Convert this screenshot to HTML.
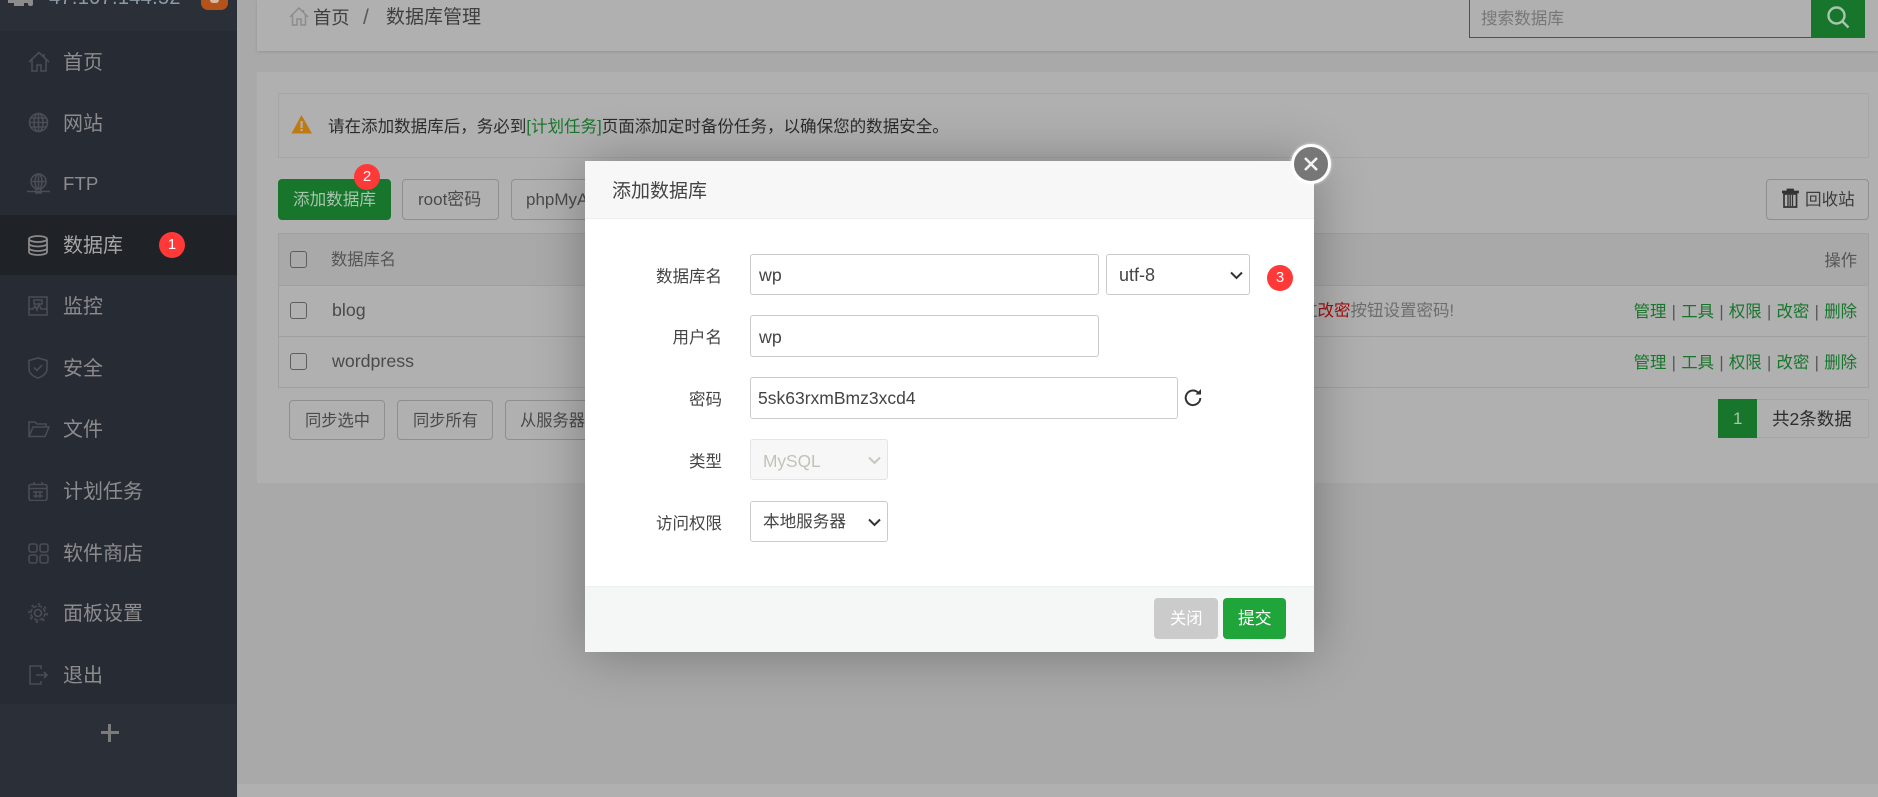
<!DOCTYPE html>
<html lang="zh"><head><meta charset="utf-8"><title>数据库管理</title>
<style>
html,body{margin:0;padding:0;width:1878px;height:797px;overflow:hidden;background:#a9a9a9}
body{position:relative;font-family:"Liberation Sans","Noto Sans CJK SC",sans-serif;font-size:16.25px;color:#3f3f3f}
div,span,svg{position:absolute;box-sizing:border-box}
.t{white-space:nowrap;height:40px;line-height:40px;margin-top:1px}
.t span{position:static}
.nav{left:63px;font-size:20px;color:#8c8c8e}
.ic{fill:none;stroke:#4a4d53;stroke-width:1.6}
.b{border:1px solid #8f8f8f;border-radius:4px;background:#b0b0b0}
.inp{border:1px solid #cbcbcb;border-radius:3px;background:#fff}
.lab{right:1156px;color:#444;font-size:16.500px}
.g{color:#17762c;word-spacing:.75px}
.cb{left:290px;width:17px;height:17px;border:1px solid #5e5e5e;border-radius:3px}
.rb{width:26px;height:26px;border-radius:50%;background:#ff3838;color:#fff;font-size:15px;line-height:26px;text-align:center}
.sep{color:#555}
</style></head><body>

<!-- sidebar -->
<div style="left:0;top:0;width:237px;height:797px;background:#2b2f38"></div>
<div style="left:0;top:31px;width:237px;height:673px;background:#272b33"></div>
<div style="left:0;top:215px;width:237px;height:60px;background:#1f2227"></div>
<div style="left:8px;top:0;width:20px;height:3px;background:#8c8c8c"></div>
<div style="left:14px;top:3px;width:10px;height:3px;background:#8c8c8c"></div>
<div style="left:28px;top:0;width:5px;height:6px;background:#8c8c8c;border-radius:0 0 2px 2px"></div>
<div class="t" style="left:49px;top:-23px;font-size:20px;color:#8c9aa6;letter-spacing:.3px">47.107.144.52</div>
<div style="left:201px;top:-18px;width:27px;height:28px;background:#b4521c;border-radius:7px"></div>
<div style="left:210px;top:0;width:9px;height:3px;background:#d8b8a4;border-radius:0 0 4px 4px"></div>

<svg class="ic" style="left:28px;top:51px" width="22" height="21" viewBox="0 0 22 21"><path d="M1 11L11 1.5 21 11M4 9v11h5v-6h4v6h5V9M16 3v3"/></svg>
<div class="t nav" style="top:42px">首页</div>
<svg class="ic" style="left:28px;top:112px" width="21" height="21" viewBox="0 0 21 21"><circle cx="10.5" cy="10.5" r="9"/><ellipse cx="10.5" cy="10.5" rx="4.5" ry="9"/><path d="M10.5 1.5v18M1.5 10.5h18M3 6h15M3 15h15"/></svg>
<div class="t nav" style="top:103px">网站</div>
<svg class="ic" style="left:27px;top:173px" width="23" height="21" viewBox="0 0 23 21"><circle cx="11.5" cy="8.500" r="7.500"/><ellipse cx="11.500" cy="8.500" rx="3.500" ry="7.500"/><path d="M11.500 1v15M4 8.500h15M0 18.500h23M9 16h5v4H9z"/></svg>
<div class="t nav" style="top:163px;font-size:18.750px">FTP</div>
<svg style="left:28px;top:235px" width="20" height="21" viewBox="0 0 20 21" fill="none" stroke="#8a8a8a" stroke-width="1.800"><ellipse cx="10" cy="4" rx="9" ry="3"/><path d="M1 4v13c0 1.700 4 3 9 3s9-1.300 9-3V4M1 8.500c0 1.700 4 3 9 3s9-1.300 9-3M1 13c0 1.700 4 3 9 3s9-1.300 9-3"/></svg>
<div class="t nav" style="top:225px;color:#a6a6a6">数据库</div>
<div class="rb" style="left:159px;top:232px">1</div>
<svg class="ic" style="left:28px;top:296px" width="20" height="20" viewBox="0 0 20 20"><path d="M1 1h18v18H1zM1 13h4l2-3 2 4 2-6 2 5h6M6 4h8v4H6z"/></svg>
<div class="t nav" style="top:286px">监控</div>
<svg class="ic" style="left:28px;top:357px" width="20" height="22" viewBox="0 0 20 22"><path d="M1 3.500L10 1l9 2.500V12c0 4-4 7.500-9 9-5-1.500-9-5-9-9zM6 10.500l3 3 5-5.500"/></svg>
<div class="t nav" style="top:348px">安全</div>
<svg class="ic" style="left:28px;top:420px" width="22" height="18" viewBox="0 0 22 18"><path d="M1 16V2h6l2 2h9v3M1 16.500h16L21 7H5z"/></svg>
<div class="t nav" style="top:409px">文件</div>
<svg class="ic" style="left:28px;top:482px" width="20" height="19" viewBox="0 0 20 19"><path d="M3 2.500h14a2 2 0 012 2v12a2 2 0 01-2 2H3a2 2 0 01-2-2v-12a2 2 0 012-2zM1 6.500h18M6 0v3M14 0v3M5 10h10M5 14h10M8 9v7M12 9v7"/></svg>
<div class="t nav" style="top:471px">计划任务</div>
<svg class="ic" style="left:28px;top:543px" width="21" height="21" viewBox="0 0 21 21" stroke-width="2"><rect x="1" y="1" width="8" height="8" rx="2"/><rect x="12" y="1" width="8" height="8" rx="2"/><rect x="1" y="12" width="8" height="8" rx="2"/><rect x="12" y="12" width="8" height="8" rx="2"/></svg>
<div class="t nav" style="top:533px">软件商店</div>
<svg class="ic" style="left:28px;top:603px" width="20" height="20" viewBox="0 0 20 20"><circle cx="10" cy="10" r="3.500"/><circle cx="10" cy="10" r="7" stroke-dasharray="4 1.500"/><circle cx="10" cy="10" r="9" stroke-dasharray="2.500 4.500"/></svg>
<div class="t nav" style="top:593px">面板设置</div>
<svg class="ic" style="left:29px;top:665px" width="20" height="20" viewBox="0 0 20 20" stroke-width="1.800"><path d="M12 4V1H1v18h11v-3M7 10h11M15 7l3 3-3 3"/></svg>
<div class="t nav" style="top:655px">退出</div>
<div style="left:101px;top:731px;width:18px;height:3px;background:#7b7b7b"></div>
<div style="left:108px;top:724px;width:3px;height:18px;background:#7b7b7b"></div>

<!-- top panel -->
<div style="left:257px;top:0;width:1621px;height:51px;background:#b0b0b0;box-shadow:0 1px 3px rgba(0,0,0,.12)"></div>
<svg style="left:289px;top:7px" width="20" height="19" viewBox="0 0 20 19" fill="none" stroke="#8c8c8c" stroke-width="1.500"><path d="M1 10L10 1l9 9M3.500 8v10h4.500v-6h4v6h4.500V8M14.500 3v3"/></svg>
<div class="t" style="left:313px;top:-3px;font-size:18.300px;color:#3f3f3f">首页</div>
<div class="t" style="left:363px;top:-3px;font-size:21px;color:#5a5a5a">/</div>
<div class="t" style="left:386px;top:-3px;font-size:19px;color:#3f3f3f">数据库管理</div>
<div style="left:1469px;top:-2px;width:343px;height:40px;border:1px solid #17762c;background:#b0b0b0"></div>
<div class="t" style="left:1481px;top:-2px;color:#777;font-size:16.600px">搜索数据库</div>
<div style="left:1811px;top:-2px;width:54px;height:40px;background:#17762c"></div>
<svg style="left:1827px;top:6px" width="23" height="23" viewBox="0 0 23 23" fill="none" stroke="#a8c5ad" stroke-width="2.400"><circle cx="9.500" cy="9.500" r="8"/><path d="M15.500 15.500l6 6"/></svg>

<!-- content panel -->
<div style="left:257px;top:72px;width:1621px;height:411px;background:#b0b0b0"></div>
<div style="top:784px;left:237px;width:1641px;height:13px;background:#b0b0b0"></div>
<div style="left:278px;top:93px;width:1591px;height:65px;border:1px solid #a6a6a6"></div>
<svg style="left:291px;top:115px" width="21" height="19" viewBox="0 0 21 19"><path d="M10.500 0L21 18.500H0.500z" fill="#c07a12"/><rect x="9.500" y="6" width="2.200" height="7" fill="#b0b0b0"/><rect x="9.500" y="14" width="2.200" height="2.200" fill="#b0b0b0"/></svg>
<div class="t" style="left:328px;top:106px;color:#2c2c2c;font-size:16.550px">请在添加数据库后，务必到<span style="color:#17762c">[计划任务]</span>页面添加定时备份任务，以确保您的数据安全。</div>

<div style="left:278px;top:179px;width:113px;height:41px;background:#17762c;border-radius:4px"></div>
<div class="t" style="left:293px;top:179px;color:#a8c5ad;font-size:16.600px">添加数据库</div>
<div class="rb" style="left:354px;top:164px">2</div>
<div class="b" style="left:402px;top:179px;width:97px;height:41px"></div>
<div class="t" style="left:418px;top:179px;color:#4a4a4a;font-size:17px">root密码</div>
<div class="b" style="left:511px;top:179px;width:160px;height:41px"></div>
<div class="t" style="left:526px;top:179px;color:#4a4a4a;font-size:17px">phpMyAdmin</div>
<div class="b" style="left:1766px;top:179px;width:103px;height:41px"></div>
<svg style="left:1782px;top:188px" width="17" height="20" viewBox="0 0 17 20"><path d="M0 3h16.500v2H0zM5 3V1h6.500v2" fill="#333" stroke="#333" stroke-width=".8"/><path d="M2 6h12.500v13H2z" fill="none" stroke="#333" stroke-width="1.700"/><path d="M6 7v11M8.200 7v11M10.500 7v11" stroke="#333" stroke-width="1.300"/></svg>
<div class="t" style="left:1805px;top:179px;color:#3c3c3c;font-size:16.600px">回收站</div>

<!-- table -->
<div style="left:278px;top:233px;width:1591px;height:155px;border:1px solid #a0a0a0"></div>
<div style="left:279px;top:234px;width:1589px;height:51px;background:#a9a9a9"></div>
<div style="left:279px;top:285px;width:1588px;height:1px;background:#a0a0a0"></div>
<div style="left:279px;top:336px;width:1588px;height:1px;background:#a0a0a0"></div>
<div class="cb" style="top:251px"></div><div class="cb" style="top:302px"></div><div class="cb" style="top:353px"></div>
<div class="t" style="left:331px;top:239px;color:#555">数据库名</div>
<div class="t" style="left:332px;top:289px;color:#4a4a4a;font-size:17.800px">blog</div>
<div class="t" style="left:332px;top:340px;color:#4a4a4a;font-size:17.800px">wordpress</div>
<div class="t" style="right:21px;top:240px;color:#555">操作</div>
<div class="t" style="left:1301px;top:290px;color:#6e6e6e;font-size:16.500px"><span style="color:#555">过</span><span style="color:#a80e0e">改密</span>按钮设置密码!</div>
<div class="t g" style="right:21px;top:291px;font-size:16.400px">管理 <span class="sep">|</span> 工具 <span class="sep">|</span> 权限 <span class="sep">|</span> 改密 <span class="sep">|</span> 删除</div>
<div class="t g" style="right:21px;top:342px;font-size:16.400px">管理 <span class="sep">|</span> 工具 <span class="sep">|</span> 权限 <span class="sep">|</span> 改密 <span class="sep">|</span> 删除</div>

<div class="b" style="left:289px;top:400px;width:96px;height:40px"></div>
<div class="t" style="left:305px;top:400px;color:#4a4a4a">同步选中</div>
<div class="b" style="left:397px;top:400px;width:96px;height:40px"></div>
<div class="t" style="left:413px;top:400px;color:#4a4a4a">同步所有</div>
<div class="b" style="left:505px;top:400px;width:140px;height:40px"></div>
<div class="t" style="left:520px;top:400px;color:#4a4a4a">从服务器获取</div>

<div style="left:1718px;top:399px;width:151px;height:39px;border:1px solid #a6a6a6"></div>
<div style="left:1718px;top:399px;width:39px;height:39px;background:#17762c"></div>
<div class="t" style="left:1733px;top:398px;color:#a8c5ad;font-size:17px">1</div>
<div class="t" style="left:1772px;top:398px;color:#2c2c2c;font-size:17.500px">共2条数据</div>

<!-- modal -->
<div style="left:585px;top:161px;width:729px;height:491px;background:#fff;box-shadow:1px 1px 50px rgba(0,0,0,.3)"></div>
<div style="left:585px;top:161px;width:729px;height:58px;background:#f7f7f7;border-bottom:1px solid #eee"></div>
<div class="t" style="left:612px;top:171px;font-size:19px;color:#444">添加数据库</div>

<div class="t lab" style="top:256px">数据库名</div>
<div class="inp" style="left:750px;top:254px;width:349px;height:41px"></div>
<div class="t" style="left:759px;top:254px;font-size:17.800px;color:#444">wp</div>
<div class="inp" style="left:1106px;top:254px;width:144px;height:41px"></div>
<div class="t" style="left:1119px;top:254px;font-size:18px;color:#444">utf-8</div>
<svg style="left:1230px;top:271px" width="13" height="9" viewBox="0 0 13 9" fill="none" stroke="#333" stroke-width="2"><path d="M1 1.500l5.500 5.500L12 1.500"/></svg>
<div class="rb" style="left:1267px;top:265px">3</div>

<div class="t lab" style="top:317px">用户名</div>
<div class="inp" style="left:750px;top:315px;width:349px;height:42px"></div>
<div class="t" style="left:759px;top:316px;font-size:17.800px;color:#444">wp</div>

<div class="t lab" style="top:379px">密码</div>
<div class="inp" style="left:750px;top:377px;width:428px;height:42px"></div>
<div class="t" style="left:758px;top:377px;font-size:17.500px;color:#444">5sk63rxmBmz3xcd4</div>
<svg style="left:1184px;top:389px" width="18" height="18" viewBox="0 0 18 18" fill="none" stroke="#333" stroke-width="2"><path d="M14.500 4A7.300 7.300 0 1 0 16.300 9"/><path d="M11.500 5.500h5.500V0z" fill="#333" stroke="none"/></svg>

<div class="t lab" style="top:441px">类型</div>
<div style="left:750px;top:439px;width:138px;height:41px;border:1px solid #e4e4e4;border-radius:3px;background:#f7f7f7"></div>
<div class="t" style="left:763px;top:440px;font-size:17.300px;color:#c4c2b8">MySQL</div>
<svg style="left:868px;top:456px" width="13" height="9" viewBox="0 0 13 9" fill="none" stroke="#c8c6bd" stroke-width="2"><path d="M1 1.500l5.500 5.500L12 1.500"/></svg>

<div class="t lab" style="top:503px">访问权限</div>
<div class="inp" style="left:750px;top:501px;width:138px;height:41px"></div>
<div class="t" style="left:763px;top:501px;color:#444;font-size:16.600px">本地服务器</div>
<svg style="left:868px;top:518px" width="13" height="9" viewBox="0 0 13 9" fill="none" stroke="#333" stroke-width="2"><path d="M1 1.500l5.500 5.500L12 1.500"/></svg>

<div style="left:585px;top:586px;width:729px;height:66px;background:#f5f7f7;border-top:1px solid #eef0f0"></div>
<div style="left:1154px;top:598px;width:64px;height:41px;background:#cbcbcb;border-radius:4px"></div>
<div class="t" style="left:1170px;top:598px;color:#fff">关闭</div>
<div style="left:1223px;top:598px;width:63px;height:41px;background:#20a53a;border-radius:4px"></div>
<div class="t" style="left:1238px;top:598px;color:#fff;font-size:16.800px">提交</div>

<div style="left:1291px;top:144px;width:40px;height:40px;border-radius:50%;background:#777;border:3px solid #fff;box-shadow:0 0 3px rgba(255,255,255,.7)"></div>
<svg style="left:1303px;top:156px" width="16" height="16" viewBox="0 0 16 16" stroke="#f2f2f2" stroke-width="2.600"><path d="M2 2l12 12M14 2L2 14"/></svg>
</body></html>
